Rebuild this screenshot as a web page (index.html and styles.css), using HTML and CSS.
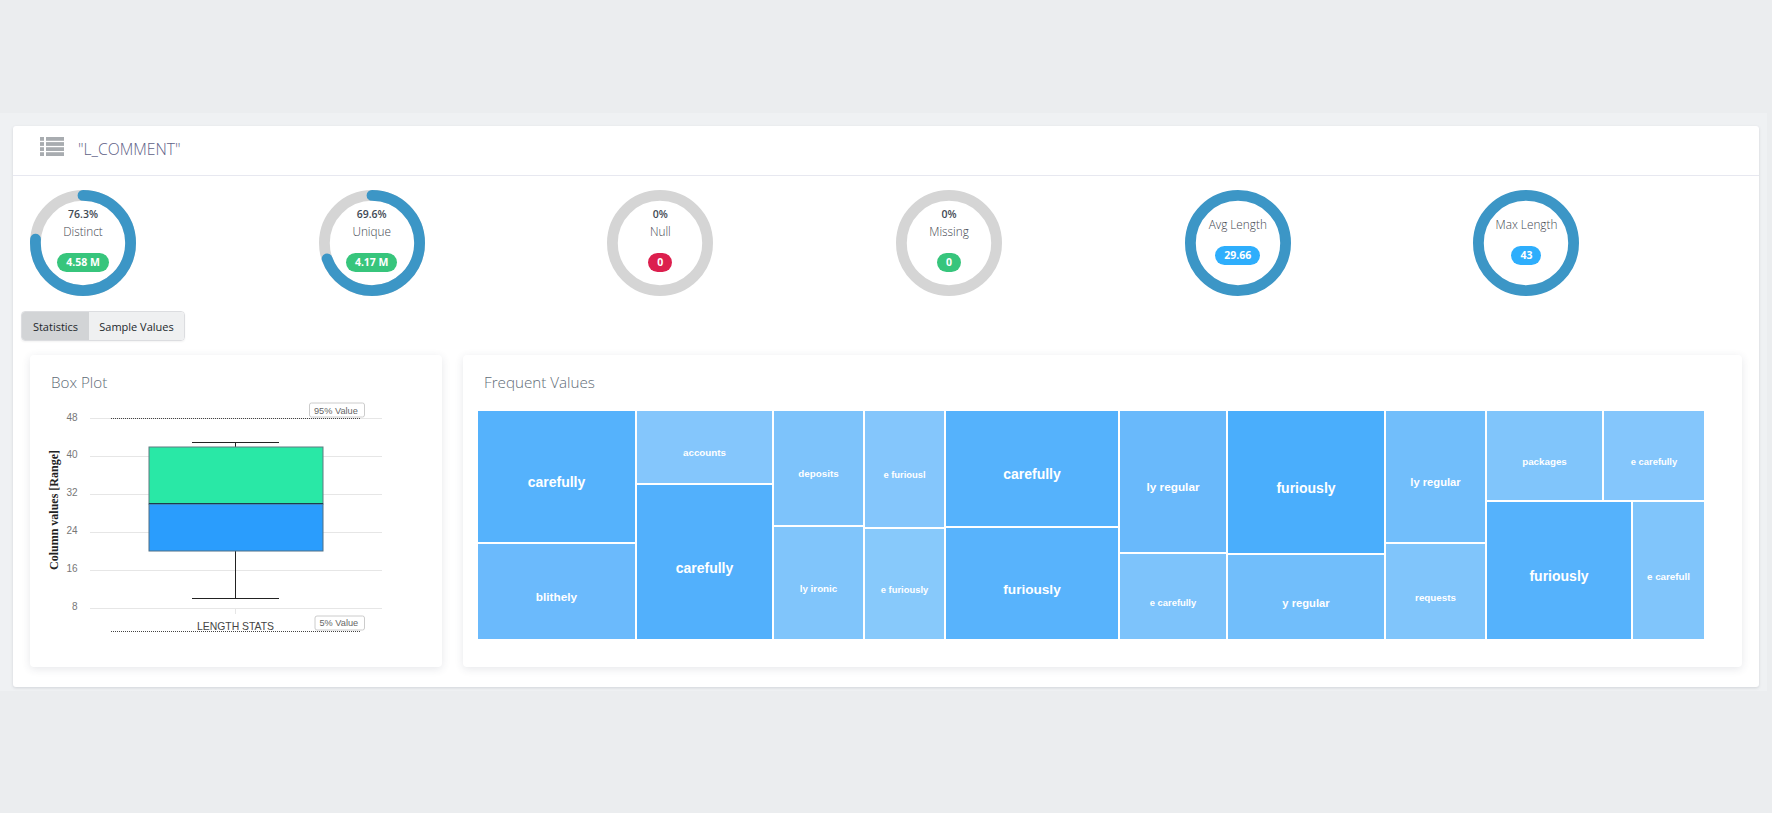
FILE: index.html
```html
<!DOCTYPE html>
<html lang="en">
<head>
<meta charset="utf-8">
<title>L_COMMENT</title>
<link rel="stylesheet" href="styles.css">
</head>
<body>
<main class="band">
  <section class="panel">
    <header class="panel-head">
      <svg class="list-icon" viewBox="0 0 24 19" aria-hidden="true">
        <rect x="0" y="0" width="4" height="3.8"/><rect x="6" y="0" width="18" height="3.8"/>
        <rect x="0" y="5.1" width="4" height="3.8"/><rect x="6" y="5.1" width="18" height="3.8"/>
        <rect x="0" y="10.2" width="4" height="3.8"/><rect x="6" y="10.2" width="18" height="3.8"/>
        <rect x="0" y="15.2" width="4" height="3.8"/><rect x="6" y="15.2" width="18" height="3.8"/>
      </svg>
      <h1 class="panel-title">"L_COMMENT"</h1>
    </header>

    <div class="gauges">
      <div class="gauge">
        <svg class="ring" viewBox="0 0 106 106" aria-hidden="true"><circle class="track" cx="53" cy="53" r="47.6"/><circle class="arc" cx="53" cy="53" r="47.6" pathLength="100" stroke-dasharray="76.3 100"/></svg>
        <div class="gauge-text"><span class="pct">76.3%</span><span class="label">Distinct</span><span class="pill green">4.58 M</span></div>
      </div>
      <div class="gauge">
        <svg class="ring" viewBox="0 0 106 106" aria-hidden="true"><circle class="track" cx="53" cy="53" r="47.6"/><circle class="arc" cx="53" cy="53" r="47.6" pathLength="100" stroke-dasharray="69.6 100"/></svg>
        <div class="gauge-text"><span class="pct">69.6%</span><span class="label">Unique</span><span class="pill green">4.17 M</span></div>
      </div>
      <div class="gauge">
        <svg class="ring" viewBox="0 0 106 106" aria-hidden="true"><circle class="track" cx="53" cy="53" r="47.6"/></svg>
        <div class="gauge-text"><span class="pct">0%</span><span class="label">Null</span><span class="pill red">0</span></div>
      </div>
      <div class="gauge">
        <svg class="ring" viewBox="0 0 106 106" aria-hidden="true"><circle class="track" cx="53" cy="53" r="47.6"/></svg>
        <div class="gauge-text"><span class="pct">0%</span><span class="label">Missing</span><span class="pill green">0</span></div>
      </div>
      <div class="gauge">
        <svg class="ring" viewBox="0 0 106 106" aria-hidden="true"><circle class="full" cx="53" cy="53" r="47.6"/></svg>
        <div class="gauge-text plain"><span class="label">Avg Length</span><span class="pill blue">29.66</span></div>
      </div>
      <div class="gauge">
        <svg class="ring" viewBox="0 0 106 106" aria-hidden="true"><circle class="full" cx="53" cy="53" r="47.6"/></svg>
        <div class="gauge-text plain"><span class="label">Max Length</span><span class="pill blue">43</span></div>
      </div>
    </div>

    <div class="btn-group">
      <button class="btn active" type="button">Statistics</button>
      <button class="btn" type="button">Sample Values</button>
    </div>

    <div class="cards">
      <article class="card box-card">
        <h2 class="card-title">Box Plot</h2>
        <svg class="box-chart" viewBox="30 398 412 260" aria-label="Box plot of length stats">
          <g class="grid">
            <line x1="90" x2="382" y1="418.5" y2="418.5"/>
            <line x1="90" x2="382" y1="456.5" y2="456.5"/>
            <line x1="90" x2="382" y1="494.5" y2="494.5"/>
            <line x1="90" x2="382" y1="532.5" y2="532.5"/>
            <line x1="90" x2="382" y1="570.5" y2="570.5"/>
            <line x1="90" x2="382" y1="608.5" y2="608.5"/>
            <line x1="235.5" x2="235.5" y1="608" y2="614"/>
          </g>
          <g class="ticks">
            <text x="77.5" y="420.5">48</text>
            <text x="77.5" y="458">40</text>
            <text x="77.5" y="496">32</text>
            <text x="77.5" y="533.5">24</text>
            <text x="77.5" y="571.5">16</text>
            <text x="77.5" y="609.5">8</text>
          </g>
          <text class="y-title" transform="translate(58 510) rotate(-90)">Column values [Range]</text>
          <g class="whisker">
            <line x1="192" x2="279" y1="442.5" y2="442.5"/>
            <line x1="235.5" x2="235.5" y1="442" y2="447"/>
            <line x1="235.5" x2="235.5" y1="551" y2="598"/>
            <line x1="192" x2="279" y1="598.5" y2="598.5"/>
          </g>
          <rect class="q-upper" x="149" y="447" width="174" height="57"/>
          <rect class="q-lower" x="149" y="504" width="174" height="47"/>
          <line class="median" x1="149" x2="323" y1="503.5" y2="503.5"/>
          <line class="ref-line" x1="111" x2="360" y1="418.5" y2="418.5"/>
          <line class="ref-line" x1="111" x2="360" y1="631.5" y2="631.5"/>
          <rect class="ref-box" x="309.5" y="403" width="55" height="14" rx="2"/>
          <text class="ref-text" x="314" y="413.5">95% Value</text>
          <rect class="ref-box" x="315" y="616" width="49.5" height="14" rx="2"/>
          <text class="ref-text" x="319.5" y="626">5% Value</text>
          <text class="x-label" x="235.5" y="630">LENGTH STATS</text>
        </svg>
      </article>

      <article class="card freq-card">
        <h2 class="card-title freq-title">Frequent Values</h2>
        <div class="treemap">
          <div class="tm-col" style="width:157px">
            <div class="tile t-c s14" style="height:131px">carefully</div>
            <div class="tile t-f s12" style="height:95px">blithely</div>
          </div>
          <div class="tm-col" style="width:135px">
            <div class="tile t-j s10" style="height:72px">accounts</div>
            <div class="tile t-b s14" style="height:154px">carefully</div>
          </div>
          <div class="tm-col" style="width:89px">
            <div class="tile t-h s10" style="height:114px">deposits</div>
            <div class="tile t-i s10" style="height:112px">ly ironic</div>
          </div>
          <div class="tm-col" style="width:79px">
            <div class="tile t-j s9" style="height:116px">e furiousl</div>
            <div class="tile t-k s9" style="height:110px">e furiously</div>
          </div>
          <div class="tm-col" style="width:172px">
            <div class="tile t-c s14" style="height:115px">carefully</div>
            <div class="tile t-d s13" style="height:111px">furiously</div>
          </div>
          <div class="tm-col" style="width:106px">
            <div class="tile t-e s12" style="height:141px">ly regular</div>
            <div class="tile t-h s9" style="height:85px">e carefully</div>
          </div>
          <div class="tm-col" style="width:156px">
            <div class="tile t-a s14" style="height:142px">furiously</div>
            <div class="tile t-g s11" style="height:84px">y regular</div>
          </div>
          <div class="tm-col" style="width:99px">
            <div class="tile t-g s11" style="height:131px">ly regular</div>
            <div class="tile t-i s10" style="height:95px">requests</div>
          </div>
          <div class="tm-col" style="width:217px">
            <div class="tm-row" style="height:89px">
              <div class="tile t-i s10" style="width:115px">packages</div>
              <div class="tile t-j s9" style="width:100px">e carefully</div>
            </div>
            <div class="tm-row" style="height:137px">
              <div class="tile t-c s14" style="width:144px">furiously</div>
              <div class="tile t-i s10" style="width:71px">e carefull</div>
            </div>
          </div>
        </div>
      </article>
    </div>
  </section>
</main>
</body>
</html>
```

FILE: styles.css
```css
* { box-sizing: border-box; }

html, body { margin: 0; padding: 0; }

body {
  height: 813px;
  overflow: hidden;
  background: #ebedef;
  font-family: "Open Sans", "Noto Sans", sans-serif;
}

.band {
  margin-top: 113px;
  margin-right: 5px;
  padding: 13px 8px 4px 13px;
  background: #eff1f3;
}

.panel {
  background: #fff;
  border-radius: 3px;
  box-shadow: 0 1px 3px rgba(60, 70, 90, 0.16);
  padding-bottom: 20px;
}

.panel-head {
  display: flex;
  align-items: center;
  gap: 14px;
  height: 50px;
  padding-left: 27px;
  padding-bottom: 4px;
  border-bottom: 1px solid #e7e8f0;
}

.list-icon { width: 24px; height: 19px; fill: #a8acb0; margin-top: -4px; }

.panel-title {
  margin: 0;
  font-size: 15.7px;
  font-weight: 300;
  color: #5e6186;
}

.gauges {
  display: grid;
  grid-template-columns: repeat(6, 288.7px);
  padding: 14px 0 0 17px;
}

.gauge { position: relative; width: 106px; height: 106px; }

.ring { display: block; width: 106px; height: 106px; }

.track, .arc, .full { fill: none; stroke-width: 10.8; }
.track { stroke: #d5d5d5; }
.full { stroke: #3c96c6; }
.arc {
  stroke: #3c96c6;
  stroke-linecap: round;
  transform: rotate(-90deg);
  transform-origin: 53px 53px;
}

.gauge-text {
  position: absolute;
  inset: 0;
  display: flex;
  flex-direction: column;
  align-items: center;
  padding-top: 16px;
}
.gauge-text.plain { padding-top: 25px; }

.pct {
  font-size: 10.5px;
  line-height: 16px;
  font-weight: 600;
  color: #3f4a55;
}

.label {
  font-size: 11.8px;
  line-height: 19px;
  font-weight: 300;
  color: #3f4750;
}

.pill {
  margin-top: 12px;
  min-width: 23px;
  height: 19px;
  padding: 0 9px;
  border-radius: 10px;
  font-family: "Noto Sans", sans-serif;
  font-size: 10.5px;
  line-height: 19px;
  font-weight: 700;
  text-align: center;
  color: #fff;
}
.green { background: #37c57c; }
.red { background: #dc1f4e; }
.blue { background: #2eaefc; }

.btn-group {
  display: inline-flex;
  margin: 15px 0 0 8px;
  border: 1px solid #dcdde0;
  border-radius: 4px;
  overflow: hidden;
  vertical-align: top;
  box-shadow: 0 1px 2px rgba(0, 0, 0, 0.05);
}

.btn {
  height: 28px;
  padding: 0;
  border: 0;
  background: #eff0f1;
  font-family: inherit;
  font-size: 11px;
  color: #23282c;
}
.btn.active { background: #d2d4d6; width: 67px; }
.btn:not(.active) { width: 95px; }

.cards {
  display: flex;
  gap: 21px;
  margin-top: 14px;
  padding: 0 17px;
}

.card {
  height: 312px;
  background: #fff;
  border-radius: 4px;
  box-shadow: 0 2px 8px rgba(50, 60, 80, 0.12);
}

.box-card { flex: 0 0 412px; }
.freq-card { flex: 1 1 auto; }

.card-title {
  margin: 0;
  padding: 16px 21px 5px;
  font-size: 15.2px;
  line-height: 22px;
  font-weight: 300;
  color: #616c77;
}
.freq-title { padding: 16px 21px 18px; }

.box-chart { display: block; width: 412px; height: 260px; }

.grid line { stroke: #e6e6e6; stroke-width: 1; }
.ticks text {
  font-family: "Liberation Sans", sans-serif;
  font-size: 10px;
  fill: #777;
  text-anchor: end;
}
.y-title {
  font-family: "Liberation Serif", serif;
  font-size: 12px;
  font-weight: 700;
  fill: #222;
  text-anchor: middle;
}
.whisker line { stroke: #222; stroke-width: 1; }
.q-upper { fill: #29e8a6; stroke: #5f7a80; stroke-width: 1; }
.q-lower { fill: #2a9dfd; stroke: #4f6f85; stroke-width: 1; }
.median { stroke: #1f3c4c; stroke-width: 1; }
.ref-line { stroke: #444; stroke-width: 1; stroke-dasharray: 1 1; }
.ref-box { fill: #fff; stroke: #ccc; stroke-width: 1; }
.ref-text {
  font-family: "Liberation Sans", sans-serif;
  font-size: 9.2px;
  fill: #666;
}
.x-label {
  font-family: "Liberation Sans", sans-serif;
  font-size: 10.4px;
  fill: #444;
  text-anchor: middle;
}

.treemap {
  display: flex;
  gap: 2px;
  height: 228px;
  margin-left: 15px;
}

.tm-col { display: flex; flex-direction: column; gap: 2px; flex: none; }
.tm-row { display: flex; gap: 2px; flex: none; }

.tile {
  display: flex;
  align-items: center;
  justify-content: center;
  flex: none;
  padding-top: 11px;
  font-family: "Liberation Sans", sans-serif;
  font-weight: 700;
  white-space: nowrap;
  color: #fff;
}

.s9 { font-size: 9.4px; }
.s10 { font-size: 9.8px; }
.s11 { font-size: 11.2px; }
.s12 { font-size: 11.8px; }
.s13 { font-size: 13.6px; }
.s14 { font-size: 14px; }

.t-a { background: #4aaefc; }
.t-b { background: #52b0fc; }
.t-c { background: #55b2fc; }
.t-d { background: #58b3fc; }
.t-e { background: #69b9fb; }
.t-f { background: #6bbafc; }
.t-g { background: #71befb; }
.t-h { background: #7dc3fb; }
.t-i { background: #80c5fb; }
.t-j { background: #84c6fc; }
.t-k { background: #87c9fb; }
```
